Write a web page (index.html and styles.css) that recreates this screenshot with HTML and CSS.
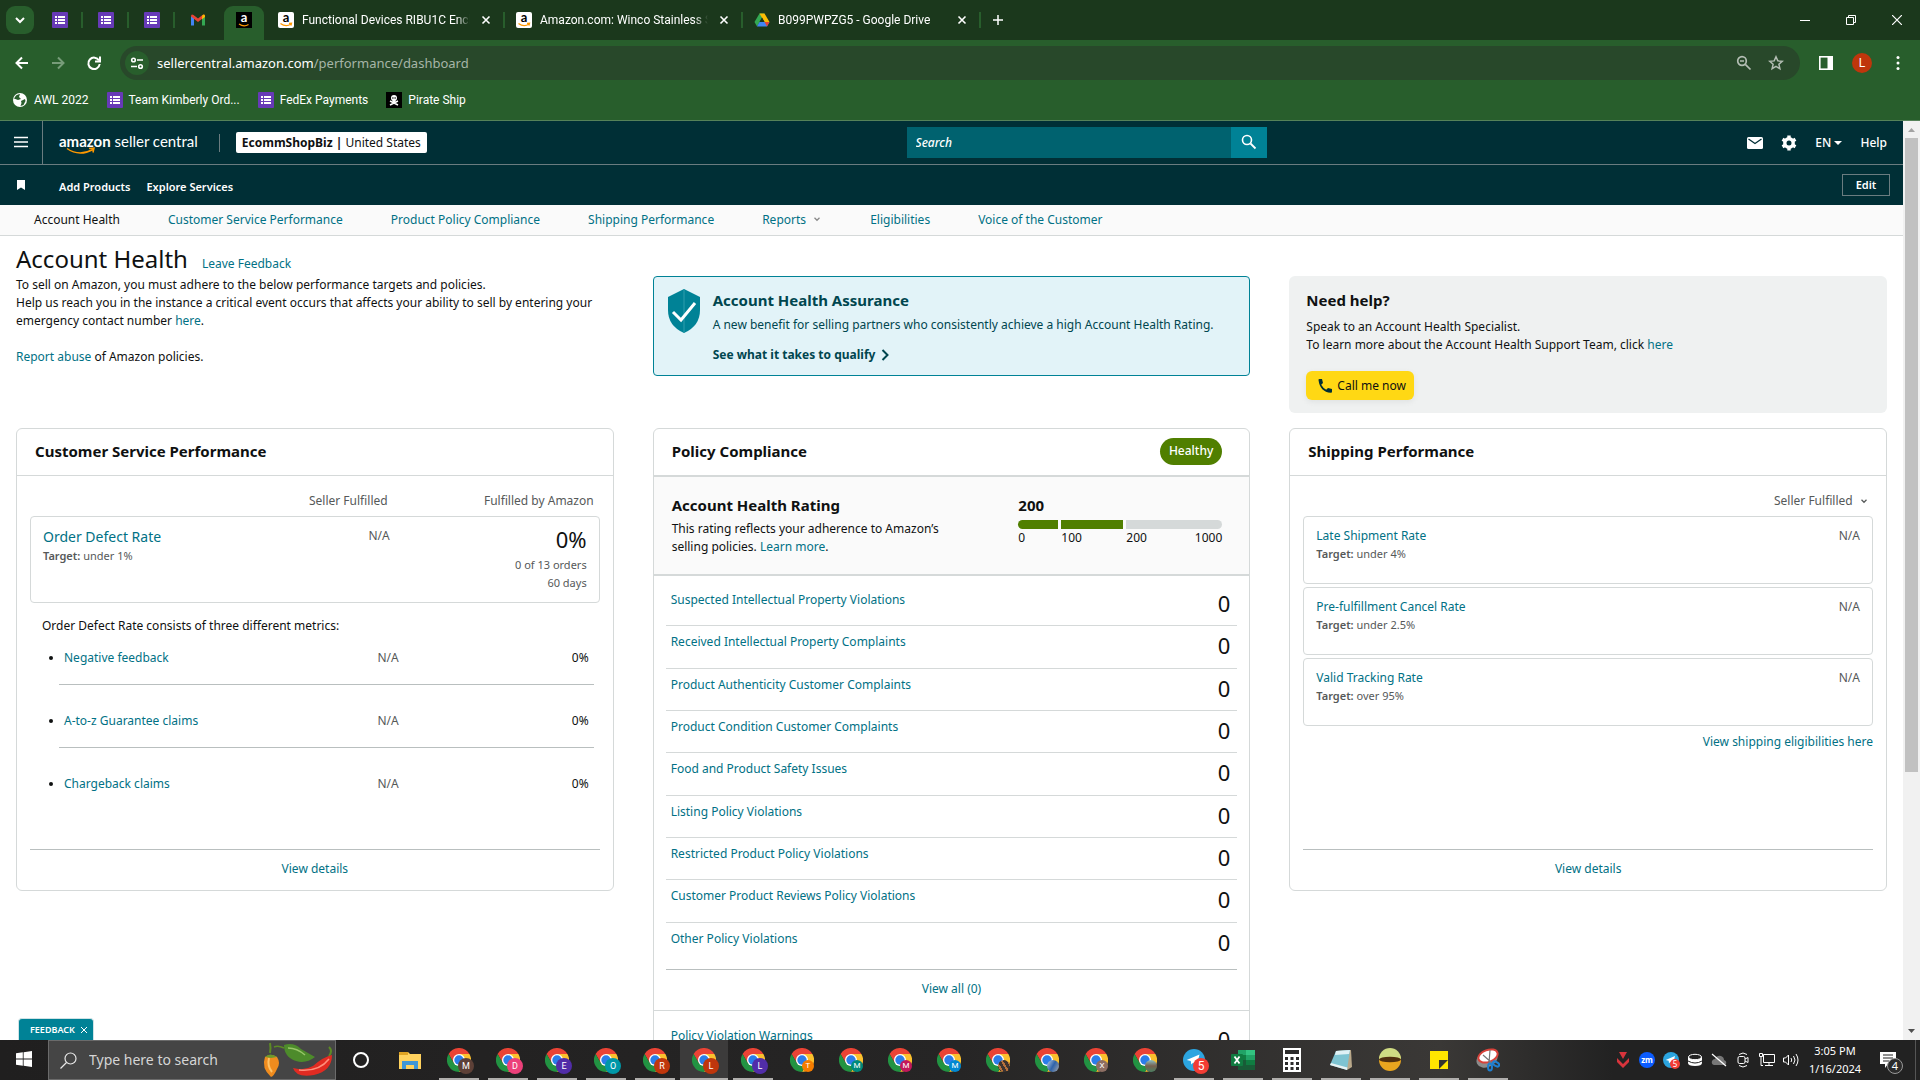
FILE: index.html
```html
<!DOCTYPE html>
<html lang="en">
<head>
    <meta charset="UTF-8">
    <meta name="viewport" content="width=device-width, initial-scale=1.0">
    <title>Account Health</title>
    <link rel="stylesheet" href="styles.css">
</head>
<body>

<!-- shared icons -->
<svg class="defs" aria-hidden="true">
    <symbol id="i-form" viewBox="0 0 16 16">
        <rect width="16" height="16" rx="1" fill="#673ab7"/>
        <path d="M3 4h2v2H3zM6 4h7v2H6zM3 7h2v2H3zM6 7h7v2H6zM3 10h2v2H3zM6 10h7v2H6z" fill="#fff"/>
    </symbol>
    <symbol id="i-amazon" viewBox="0 0 16 16">
        <rect width="16" height="16" rx="2" fill="#fff"/>
        <text x="8" y="10" text-anchor="middle" class="fav-a" fill="#000">a</text>
        <path d="M2.500 11.500q5.500 4 10.500 .5M11 11.300l2.500-.2-.6 2.400" fill="none" stroke="#f90" stroke-width="1.300"/>
    </symbol>
    <symbol id="i-amazon-dark" viewBox="0 0 16 16">
        <rect width="16" height="16" fill="#000"/>
        <text x="8" y="10" text-anchor="middle" class="fav-a" fill="#fff">a</text>
        <path d="M3 12q5 3.500 9.500 .5" fill="none" stroke="#f90" stroke-width="1.200"/>
    </symbol>
    <symbol id="i-close" viewBox="0 0 16 16"><path d="M4.500 4.500l7 7M11.500 4.500l-7 7" stroke="currentColor" stroke-width="1.600"/></symbol>
    <symbol id="i-chevron" viewBox="0 0 16 16"><path d="M4 6l4 4 4-4" fill="none" stroke="currentColor" stroke-width="2"/></symbol>
    <symbol id="i-chrome" viewBox="0 0 24 24">
        <path d="M12 6h10.400A12 12 0 0 0 1.600 6l5.200 9z" fill="#ea4335"/>
        <path d="M12 6h10.400A12 12 0 0 1 12 24l5.200-9z" fill="#fbc02d"/>
        <path d="M6.800 15L1.600 6A12 12 0 0 0 12 24l5.200-9z" fill="#229342"/>
        <circle cx="12" cy="12" r="6" fill="#fff"/>
        <circle cx="12" cy="12" r="4.700" fill="#2b7de9"/>
    </symbol>
    <symbol id="i-telegram" viewBox="0 0 24 24">
        <circle cx="12" cy="12" r="12" fill="#2ca5e0"/>
        <path d="M4 12l14-6-3 12-4-3-2 2-.5-4z" fill="#fff"/>
    </symbol>
    <symbol id="i-search" viewBox="0 0 16 16"><circle cx="6" cy="6" r="4.500" fill="none" stroke="currentColor" stroke-width="1.600"/><path d="M9.500 9.500l5 5" stroke="currentColor" stroke-width="1.800"/></symbol>
</svg>

<header class="browser">
    <div class="tab-strip">
        <button class="tab-search" aria-label="Search tabs"><svg width="16" height="16"><use href="#i-chevron"/></svg></button>
        <div class="tab pinned"><svg width="16" height="16"><use href="#i-form"/></svg></div>
        <div class="tab pinned"><svg width="16" height="16"><use href="#i-form"/></svg></div>
        <div class="tab pinned"><svg width="16" height="16"><use href="#i-form"/></svg></div>
        <div class="tab pinned no-line">
            <svg width="16" height="16" viewBox="0 0 16 16"><path d="M1 13.500V4l3 2v7.500z" fill="#4285f4"/><path d="M15 13.500V4l-3 2v7.500z" fill="#34a853"/><path d="M1 4.500Q1 1.500 3.500 3L8 6.500 12.500 3Q15 1.500 15 4.500L8 10z" fill="#ea4335"/><path d="M12 5.200l.5-2.200Q15 1.500 15 4.500V5l-3 2.300z" fill="#fbbc04"/></svg>
        </div>
        <div class="tab pinned active"><svg width="16" height="16"><use href="#i-amazon-dark"/></svg></div>
        <div class="tab">
            <svg width="16" height="16"><use href="#i-amazon"/></svg>
            <span class="tab-title">Functional Devices RIBU1C Encl</span>
            <button aria-label="Close tab"><svg width="16" height="16"><use href="#i-close"/></svg></button>
        </div>
        <div class="tab">
            <svg width="16" height="16"><use href="#i-amazon"/></svg>
            <span class="tab-title">Amazon.com: Winco Stainless S</span>
            <button aria-label="Close tab"><svg width="16" height="16"><use href="#i-close"/></svg></button>
        </div>
        <div class="tab">
            <svg width="16" height="16" viewBox="0 0 16 16"><path d="M5.500 1.500h5L8 6 3 14.500.5 10z" fill="#34a853"/><path d="M5.500 1.500h5l5 8.500h-5z" fill="#fbbc04"/><path d="M3 14.500L5.500 10h10L13 14.500z" fill="#4285f4"/><path d="M10.500 10h5L13 14.500z" fill="#ea4335"/><path d="M8 5.500L10.500 10h-5z" fill="#1b381c"/></svg>
            <span class="tab-title">B099PWPZG5 - Google Drive</span>
            <button aria-label="Close tab"><svg width="16" height="16"><use href="#i-close"/></svg></button>
        </div>
        <button class="new-tab" aria-label="New tab"><svg width="16" height="16" viewBox="0 0 16 16"><path d="M8 3v10M3 8h10" stroke="#fff" stroke-width="1.500"/></svg></button>
        <div class="window-buttons">
            <button aria-label="Minimize"><svg width="10" height="10"><path d="M0 5.500h10" stroke="#fff"/></svg></button>
            <button aria-label="Restore"><svg width="10" height="10" fill="none" stroke="#fff"><path d="M.5 2.500h7v7h-7zM2.500 2.500v-2h7v7h-2"/></svg></button>
            <button aria-label="Close"><svg width="10" height="10"><path d="M0 0l10 10M10 0L0 10" stroke="#fff" stroke-width="1.200"/></svg></button>
        </div>
    </div>
    <div class="toolbar">
        <div class="nav-buttons">
            <button aria-label="Back"><svg width="16" height="16" viewBox="0 0 16 16" fill="none" stroke="#fff" stroke-width="2"><path d="M14 8H3M8 2.500L2.500 8 8 13.500"/></svg></button>
            <button aria-label="Forward"><svg width="16" height="16" viewBox="0 0 16 16" fill="none" stroke="#779c79" stroke-width="2"><path d="M2 8h11M8 2.500L13.500 8 8 13.500"/></svg></button>
            <button aria-label="Reload"><svg width="16" height="16" viewBox="0 0 16 16" fill="none" stroke="#fff" stroke-width="2"><path d="M13 5.500A5.700 5.700 0 1 0 13.700 9"/><path d="M14 1.500V6.500H9" /></svg></button>
        </div>
        <div class="omnibox">
            <span class="site-info"><svg width="14" height="14" viewBox="0 0 14 14" fill="none" stroke="#fff" stroke-width="1.600"><circle cx="3.500" cy="4" r="1.800"/><path d="M7 4h6M1 10.500h6"/><circle cx="10.500" cy="10.500" r="1.800"/></svg></span>
            <p class="url">sellercentral.amazon.com<span>/performance/dashboard</span></p>
            <svg width="16" height="16" viewBox="0 0 16 16" fill="none" stroke="#b4beb4" stroke-width="1.700"><circle cx="6" cy="6" r="4.300"/><path d="M9.300 9.300l5.200 5.200M4 6h4"/></svg>
            <svg width="16" height="16" viewBox="0 0 16 16" fill="none" stroke="#b4beb4" stroke-width="1.500"><path d="M8 1.800l1.800 4.100 4.500.4-3.400 3 1 4.400L8 11.400l-3.900 2.300 1-4.400-3.400-3 4.500-.4z"/></svg>
        </div>
        <svg width="16" height="16" viewBox="0 0 16 16"><rect x="1.800" y="1.800" width="12.400" height="12.400" fill="none" stroke="#fff" stroke-width="1.600"/><path d="M9.500 2H14v12H9.500z" fill="#fff"/></svg>
        <span class="avatar">L</span>
        <svg width="16" height="16" viewBox="0 0 16 16" fill="#fff"><circle cx="8" cy="2.500" r="1.500"/><circle cx="8" cy="8" r="1.500"/><circle cx="8" cy="13.500" r="1.500"/></svg>
    </div>
    <nav class="bookmarks">
        <a href="#"><svg width="16" height="16" viewBox="0 0 16 16"><circle cx="8" cy="8" r="7" fill="#fff"/><path d="M4 3.500Q6 2 8 2L7 5 9 7 6 8 2 6.500zM9 9l4-2 .5 2-2 4-3 1 1-3z" fill="#285e2c"/></svg>AWL 2022</a>
        <a href="#"><svg width="16" height="16"><use href="#i-form"/></svg>Team Kimberly Ord...</a>
        <a href="#"><svg width="16" height="16"><use href="#i-form"/></svg>FedEx Payments</a>
        <a href="#"><svg width="16" height="16" viewBox="0 0 16 16"><rect width="16" height="16" fill="#000"/><circle cx="8" cy="6" r="3" fill="#fff"/><path d="M6.500 8h3v2h-3z" fill="#fff"/><path d="M4 9l8 4M12 9l-8 4" stroke="#fff" stroke-width="1.500"/><circle cx="6.900" cy="6" r=".8"/><circle cx="9.100" cy="6" r=".8"/></svg>Pirate Ship</a>
    </nav>
</header>

<div class="viewport">
    <div class="page">
        <div class="sc-header">
            <button class="burger" aria-label="Menu"><svg width="14" height="12" viewBox="0 0 14 12"><path d="M0 1.500h14M0 6h14M0 10.500h14" stroke="#fff" stroke-width="1.500"/></svg></button>
            <a class="logo" href="#"><b>amazon</b> seller central
                <svg width="30" height="8" viewBox="0 0 30 8" fill="none" stroke="#f90" stroke-width="1.500"><path d="M1 1.500Q13 10 27 2.500M23 1.500l5-.5-1 4.500"/></svg>
            </a>
            <button class="store"><b>EcommShopBiz |</b> United States</button>
            <form class="search">
                <input type="text" placeholder="Search" aria-label="Search">
                <button type="button" aria-label="Search"><svg width="16" height="16"><use href="#i-search"/></svg></button>
            </form>
            <div class="tools">
                <a href="#" aria-label="Messages"><svg width="16" height="12" viewBox="0 0 16 12"><rect width="16" height="12" rx="1.500" fill="#fff"/><path d="M1.500 2L8 6.500 14.500 2" fill="none" stroke="#002f36" stroke-width="1.300"/></svg></a>
                <a href="#" aria-label="Settings"><svg width="16" height="16" viewBox="0 0 16 16"><circle cx="8" cy="8" r="4.200" fill="none" stroke="#fff" stroke-width="3.400"/><path d="M8 .5v3M8 12.500v3M1.500 4.250l2.600 1.500M11.900 10.250l2.600 1.500M14.500 4.250l-2.600 1.500M4.100 10.250l-2.600 1.500" stroke="#fff" stroke-width="3.400"/></svg></a>
                <button>EN <svg width="8" height="4"><path d="M0 0h8L4 4z" fill="#fff"/></svg></button>
                <a href="#">Help</a>
            </div>
        </div>
        <div class="sc-favorites">
            <svg width="8" height="10" viewBox="0 0 8 10"><path d="M0 0h8v10L4 7.500 0 10z" fill="#fff"/></svg>
            <a href="#">Add Products</a>
            <a href="#">Explore Services</a>
            <button>Edit</button>
        </div>
        <nav class="sc-tabs">
            <a class="current" href="#">Account Health</a>
            <a href="#">Customer Service Performance</a>
            <a href="#">Product Policy Compliance</a>
            <a href="#">Shipping Performance</a>
            <a href="#">Reports <svg width="10" height="10" viewBox="0 0 16 16"><use href="#i-chevron"/></svg></a>
            <a href="#">Eligibilities</a>
            <a href="#">Voice of the Customer</a>
        </nav>

        <main>
            <section class="intro">
                <div class="title-row"><h1>Account Health</h1><a href="#">Leave Feedback</a></div>
                <p>To sell on Amazon, you must adhere to the below performance targets and policies.</p>
                <p>Help us reach you in the instance a critical event occurs that affects your ability to sell by entering your emergency contact number <a href="#">here</a>.</p>
                <p class="abuse"><a href="#">Report abuse</a> of Amazon policies.</p>
            </section>

            <section class="assurance">
                <svg width="34" height="44" viewBox="0 0 34 44"><path d="M17 0l16 8v13q0 16-16 23Q1 37 1 21V8z" fill="#008296"/><path d="M17 0v44" stroke="#2f9dac"/><path d="M6 23l8 8 14-17" fill="none" stroke="#fff" stroke-width="3"/></svg>
                <div>
                    <h2>Account Health Assurance</h2>
                    <p>A new benefit for selling partners who consistently achieve a high Account Health Rating.</p>
                    <a href="#">See what it takes to qualify <svg width="8" height="12" viewBox="0 0 8 12"><path d="M1.500 1l5 5-5 5" fill="none" stroke="#00464f" stroke-width="2"/></svg></a>
                </div>
            </section>

            <section class="help">
                <h2>Need help?</h2>
                <p>Speak to an Account Health Specialist.</p>
                <p>To learn more about the Account Health Support Team, click <a href="#">here</a></p>
                <button><svg width="14" height="14" viewBox="0 0 14 14"><path d="M.5 1Q.3 0 1.500 0H4l1 4-1.800 1.800Q5 9 8.200 10.800L10 9l4 1v2.500q0 1.500-1.200 1.300Q2 13 .5 1z" fill="#002f36"/></svg>Call me now</button>
            </section>

            <section class="card">
                <div class="card-head"><h2>Customer Service Performance</h2></div>
                <div class="card-body">
                    <div class="columns col-head"><span></span><span>Seller Fulfilled</span><span>Fulfilled by Amazon</span></div>
                    <div class="columns odr">
                        <div><a class="odr-link" href="#">Order Defect Rate</a><p class="target"><b>Target:</b> under 1%</p></div>
                        <span class="grey">N/A</span>
                        <div class="odr-value"><strong>0%</strong><p>0 of 13 orders</p><p>60 days</p></div>
                    </div>
                    <p class="consists">Order Defect Rate consists of three different metrics:</p>
                    <ul class="metrics">
                        <li><div class="columns"><a href="#">Negative feedback</a><span class="grey">N/A</span><span>0%</span></div></li>
                        <li><div class="columns"><a href="#">A-to-z Guarantee claims</a><span class="grey">N/A</span><span>0%</span></div></li>
                        <li><div class="columns"><a href="#">Chargeback claims</a><span class="grey">N/A</span><span>0%</span></div></li>
                    </ul>
                    <div class="card-foot"><a href="#">View details</a></div>
                </div>
            </section>

            <section class="card policy">
                <div class="card-head"><h2>Policy Compliance</h2><span class="healthy">Healthy</span></div>
                <div class="rating">
                    <div class="rating-text">
                        <h2>Account Health Rating</h2>
                        <p>This rating reflects your adherence to Amazon’s selling policies. <a href="#">Learn more</a>.</p>
                    </div>
                    <div class="meter">
                        <h2>200</h2>
                        <div class="bar"><i></i><i></i><i></i></div>
                        <div class="scale"><span>0</span><span>100</span><span>200</span><span>1000</span></div>
                    </div>
                </div>
                <ul class="violations">
                    <li><a href="#">Suspected Intellectual Property Violations</a><span>0</span></li>
                    <li><a href="#">Received Intellectual Property Complaints</a><span>0</span></li>
                    <li><a href="#">Product Authenticity Customer Complaints</a><span>0</span></li>
                    <li><a href="#">Product Condition Customer Complaints</a><span>0</span></li>
                    <li><a href="#">Food and Product Safety Issues</a><span>0</span></li>
                    <li><a href="#">Listing Policy Violations</a><span>0</span></li>
                    <li><a href="#">Restricted Product Policy Violations</a><span>0</span></li>
                    <li><a href="#">Customer Product Reviews Policy Violations</a><span>0</span></li>
                    <li><a href="#">Other Policy Violations</a><span>0</span></li>
                </ul>
                <div class="view-all"><a href="#">View all (0)</a></div>
                <ul class="violations warnings">
                    <li><a href="#">Policy Violation Warnings</a><span>0</span></li>
                </ul>
            </section>

            <section class="card">
                <div class="card-head"><h2>Shipping Performance</h2></div>
                <div class="card-body">
                    <label class="fulfilment">
                        <select aria-label="Fulfilment"><option>Seller Fulfilled</option></select>
                        <svg width="10" height="10" viewBox="0 0 16 16"><use href="#i-chevron"/></svg>
                    </label>
                    <div class="rate"><div><a href="#">Late Shipment Rate</a><p class="target"><b>Target:</b> under 4%</p></div><span class="grey">N/A</span></div>
                    <div class="rate"><div><a href="#">Pre-fulfillment Cancel Rate</a><p class="target"><b>Target:</b> under 2.5%</p></div><span class="grey">N/A</span></div>
                    <div class="rate"><div><a href="#">Valid Tracking Rate</a><p class="target"><b>Target:</b> over 95%</p></div><span class="grey">N/A</span></div>
                    <a class="eligibilities" href="#">View shipping eligibilities here</a>
                    <div class="card-foot"><a href="#">View details</a></div>
                </div>
            </section>
        </main>
        <button class="feedback">FEEDBACK<svg width="8" height="8" viewBox="0 0 8 8"><path d="M1 1l6 6M7 1L1 7" stroke="#fff"/></svg></button>
    </div>
    <div class="scrollbar">
        <svg width="17" height="17"><path d="M5 11h7L8.500 7z" fill="#a3a3a3"/></svg>
        <div class="thumb"></div>
        <svg width="17" height="17"><path d="M5 6h7L8.500 10z" fill="#505050"/></svg>
    </div>
</div>

<footer class="taskbar">
    <button class="start" aria-label="Start"><svg width="16" height="16" viewBox="0 0 16 16" fill="#fff"><path d="M0 2.300L6.800 1.300V7.600H0zM7.600 1.200L16 0V7.600H7.600zM0 8.400H6.800V14.700L0 13.700zM7.600 8.400H16V16L7.600 14.800z"/></svg></button>
    <label class="task-search">
        <svg width="17" height="17" viewBox="0 0 17 17" fill="none" stroke="#e8e8e8" stroke-width="1.200"><circle cx="10.500" cy="6.500" r="5.500"/><path d="M6.500 10.500L.5 16.500"/></svg>
        <input type="text" placeholder="Type here to search">
        <svg class="peppers" width="72" height="36" viewBox="0 0 72 36">
            <path d="M9 11Q10 6 9 1" fill="none" stroke="#5d8a25" stroke-width="2"/>
            <path d="M4 15q6-4 12 0 4 6 0 12-3 7-6 8-10-9-6-20z" fill="#f08c1e"/><path d="M8 16q-2 8 3 14" stroke="#ffc266" stroke-width="2" fill="none"/>
            <path d="M4 15q5-5 12 0l-6 1z" fill="#6d9a2c"/>
            <path d="M23 6Q17 3 13 5" fill="none" stroke="#5d8a25" stroke-width="1.500"/>
            <path d="M23 3q10-3 17 4 7 4 14 8-9 7-19 4-12-4-12-16z" fill="#4d8b2b"/><path d="M27 6q9 0 17 7" stroke="#98c768" stroke-width="1.500" fill="none"/>
            <path d="M68 14q4-5 0-9" fill="none" stroke="#5d8a25" stroke-width="2"/>
            <path d="M71 13q0 16-18 20-18 3-21-7 11 3 20-2 10-9 19-11z" fill="#e12b22"/><path d="M38 28q20 2 30-11" stroke="#ff8f7c" stroke-width="1.500" fill="none"/>
        </svg>
    </label>
    <nav class="apps">
        <a href="#"><svg width="24" height="24" viewBox="0 0 24 24"><circle cx="12" cy="12" r="7" fill="none" stroke="#fff" stroke-width="2"/></svg></a>
        <a href="#"><svg width="24" height="24" viewBox="0 0 24 24"><path d="M1 4h9l2 2h11v15H1z" fill="#ffd25e"/><path d="M1 4h9v3H1z" fill="#dfa323"/><path d="M4 21v-8h16v8h-4v-4H8v4z" fill="#3f97d6"/></svg></a>
        <a class="open" href="#"><svg width="24" height="24"><use href="#i-chrome"/></svg><span class="badge brown">M</span></a>
        <a class="open" href="#"><svg width="24" height="24"><use href="#i-chrome"/></svg><span class="badge pink">D</span></a>
        <a class="open" href="#"><svg width="24" height="24"><use href="#i-chrome"/></svg><span class="badge purple">E</span></a>
        <a class="open" href="#"><svg width="24" height="24"><use href="#i-chrome"/></svg><span class="badge teal">O</span></a>
        <a class="open" href="#"><svg width="24" height="24"><use href="#i-chrome"/></svg><span class="badge rust">R</span></a>
        <a class="open focused" href="#"><svg width="24" height="24"><use href="#i-chrome"/></svg><span class="badge rust">L</span></a>
        <a class="open" href="#"><svg width="24" height="24"><use href="#i-chrome"/></svg><span class="badge purple">L</span></a>
        <a href="#"><svg width="24" height="24"><use href="#i-chrome"/></svg><span class="badge small orange">T</span></a>
        <a href="#"><svg width="24" height="24"><use href="#i-chrome"/></svg><span class="badge small green">M</span></a>
        <a href="#"><svg width="24" height="24"><use href="#i-chrome"/></svg><span class="badge small magenta">M</span></a>
        <a href="#"><svg width="24" height="24"><use href="#i-chrome"/></svg><span class="badge small blue">M</span></a>
        <a href="#"><svg width="24" height="24"><use href="#i-chrome"/></svg><span class="badge small photo-a"></span></a>
        <a href="#"><svg width="24" height="24"><use href="#i-chrome"/></svg><span class="badge small photo-b"></span></a>
        <a href="#"><svg width="24" height="24"><use href="#i-chrome"/></svg><span class="badge small tan">X</span></a>
        <a href="#"><svg width="24" height="24"><use href="#i-chrome"/></svg><span class="badge small photo-c"></span></a>
        <a class="open" href="#"><svg width="22" height="22"><use href="#i-telegram"/></svg><span class="badge red">5</span></a>
        <a class="open" href="#"><svg width="24" height="24" viewBox="0 0 24 24"><path d="M7 2h17v20H7z" fill="#21a366"/><path d="M7 7h8v5H7z" fill="#107c41"/><path d="M15 2h9v5h-9z" fill="#33c481"/><path d="M7 12h8v5H7z" fill="#185c37"/><path d="M15 12h9v5h-9z" fill="#107c41"/><path d="M7 17h17v5H7z" fill="#185c37"/><rect y="6" width="12" height="12" rx="1" fill="#107c41"/><path d="M3.500 8.500l5 7M8.500 8.500l-5 7" stroke="#fff" stroke-width="1.800"/></svg></a>
        <a class="open" href="#"><svg width="24" height="24" viewBox="0 0 24 24"><path d="M3 0h18v24H3z" fill="#fff"/><path d="M5 2h14v4H5zM5 9h3v3H5zM10.500 9h3v3h-3zM16 9h3v3h-3zM5 14h3v3H5zM10.500 14h3v3h-3zM16 14h3v3h-3zM5 19h3v3H5zM10.500 19h3v3h-3zM16 19h3v3h-3z" fill="#2c2b2b"/></svg></a>
        <a class="open" href="#"><svg width="24" height="24" viewBox="0 0 24 24"><path d="M7 3l15-1 1 17-5 3z" fill="#b9a88a"/><path d="M7 3l14-1-3 20-17-5z" fill="#7ec4d2"/><path d="M7 3l14-1-1 4L6 7z" fill="#dff1f5"/><path d="M1 17l17 5 .4-2.500L2 15z" fill="#e8f2f3"/></svg></a>
        <a class="open" href="#"><svg width="24" height="24" viewBox="0 0 24 24"><circle cx="12" cy="12" r="11" fill="#e9a51f"/><path d="M1 11a11 11 0 0 1 22 0z" fill="#cfdc83"/><ellipse cx="12" cy="11.500" rx="11" ry="2.800" fill="#50300f"/></svg></a>
        <a class="open" href="#"><svg width="24" height="24" viewBox="0 0 24 24"><path d="M3 3h18v9h-9v9H3z" fill="#ffe500"/><path d="M12 21v-9h9z" fill="#33322f"/><path d="M21 12v9h-9z" fill="#ffe500"/></svg></a>
        <a class="open" href="#"><svg width="24" height="24" viewBox="0 0 24 24"><ellipse cx="11" cy="11" rx="11" ry="8" fill="#8b8b8b" transform="rotate(-25 11 11)"/><ellipse cx="12" cy="8" rx="10" ry="6" fill="#fff" stroke="#d9423a" stroke-width="2" transform="rotate(-20 12 8)"/><path d="M7 7l9 8M14 2l-1 13" stroke="#777" stroke-width="1.200"/><g fill="none" stroke="#1f7fd0" stroke-width="2"><ellipse cx="14" cy="19" rx="2" ry="3.500"/><ellipse cx="20" cy="16" rx="3.500" ry="2" transform="rotate(30 20 16)"/></g></svg></a>
    </nav>
    <div class="tray">
        <svg width="16" height="16" viewBox="0 0 16 16" fill="#d8343c"><path d="M4 0h8L8 7zM2 6l6 6 6-6v4l-6 6-6-6z"/></svg>
        <span class="zoom">zm</span>
        <span class="tray-telegram"><svg width="16" height="16"><use href="#i-telegram"/></svg><i>5</i></span>
        <svg width="16" height="16" viewBox="0 0 16 16"><path d="M1 5v6q0 3 7 3t7-3V5z" fill="#fff"/><ellipse cx="8" cy="5" rx="6.500" ry="2.700" fill="#222" stroke="#fff"/><path d="M1 9q7 4 14 0" fill="none" stroke="#222"/></svg>
        <svg width="16" height="16" viewBox="0 0 16 16"><path d="M3 13q-3-1-2-4 1-2 3-2 2-4 6-3 3 1 3 4 3 1 2 4l-1 1z" fill="#777"/><path d="M1 2l14 12" stroke="#fff" stroke-width="1.200"/></svg>
        <svg width="16" height="16" viewBox="0 0 16 16" fill="none" stroke="#fff"><rect x="3" y="4.500" width="7" height="7" rx="1.500"/><path d="M10 7l3-1.500v5L10 9M4 2.500q4-3 8 0M4 13.500q4 3 8 0"/></svg>
        <svg width="16" height="16" viewBox="0 0 16 16" fill="none" stroke="#fff"><path d="M4.500 2.500h11v8h-11zM10 10.500v3M6 13.500h8M.5 1.500h3v3h-3zM2 4.500v9h2"/></svg>
        <svg width="16" height="16" viewBox="0 0 16 16" fill="none" stroke="#fff"><path d="M.5 6h2l3-3v10l-3-3h-2zM8 6q1.500 2 0 4M10.500 4q3 4 0 8M13 2q4 6 0 12"/></svg>
        <div class="clock"><p>3:05 PM</p><p>1/16/2024</p></div>
        <span class="notify"><svg width="18" height="16" viewBox="0 0 18 16"><path d="M1 0h16v12H9l-3 4v-4H1z" fill="#fff"/><path d="M4 3h10M4 6h10M4 9h6" stroke="#222"/></svg><i>4</i></span>
    </div>
</footer>

</body>
</html>
```
FILE: styles.css
```css
* {
    box-sizing: border-box;
    margin: 0;
    padding: 0;
}

body {
    display: flex;
    flex-direction: column;
    height: 100vh;
    overflow: hidden;
    background-color: #fff;
    color: #0f1111;
    font-family: "Noto Sans", "Open Sans", sans-serif;
    font-size: 12px;
    line-height: 18px;
}

a {
    color: #017185;
    text-decoration: none;
}

button, input, select {
    font: inherit;
    color: inherit;
    background: none;
    border: none;
}

svg {
    flex: none;
}

ul {
    list-style: none;
}

.defs {
    display: none;
}

.fav-a {
    font: bold 13px Lato, sans-serif;
}

/* Browser */
.browser {
    background-color: #285e2c;
    border-bottom: 1px solid #558259;
    color: #fff;
    font-family: Roboto, sans-serif;
}

.tab-strip {
    display: flex;
    align-items: center;
    height: 40px;
    padding-left: 6px;
    background-color: #1b381c;
}

.tab-search {
    display: flex;
    align-items: center;
    justify-content: center;
    width: 28px;
    height: 28px;
    margin-right: 3px;
    border-radius: 9px;
    background-color: #285e2c;
}

.tab {
    position: relative;
    display: flex;
    align-items: center;
    gap: 8px;
    width: 238px;
    height: 34px;
    padding: 0 11px;
}

.tab::after {
    content: "";
    position: absolute;
    right: 0;
    width: 2px;
    height: 16px;
    background-color: #285e2c;
}

.tab.no-line::after, .tab.active::after {
    display: none;
}

.tab.pinned {
    justify-content: center;
    width: 46px;
    padding: 0;
}

.tab.active {
    align-self: flex-end;
    width: 40px;
    margin: 0 3px;
    padding-bottom: 6px;
    border-radius: 9px 9px 0 0;
    background-color: #285e2c;
}

.tab-title {
    flex: 1;
    overflow: hidden;
    white-space: nowrap;
    mask-image: linear-gradient(to right, #000 92%, transparent);
}

.tab button, .new-tab {
    display: flex;
}

.new-tab {
    margin-left: 9px;
}

.window-buttons {
    display: flex;
    margin-left: auto;
}

.window-buttons button {
    width: 46px;
    line-height: 10px;
}

.toolbar {
    display: flex;
    align-items: center;
    gap: 18px;
    height: 46px;
    padding: 0 14px;
}

.nav-buttons {
    display: flex;
    gap: 20px;
}

.nav-buttons button {
    display: flex;
}

.omnibox {
    flex: 1;
    display: flex;
    align-items: center;
    gap: 16px;
    height: 34px;
    padding: 0 16px 0 5px;
    border-radius: 17px;
    background-color: #28482a;
}

.site-info {
    display: flex;
    align-items: center;
    justify-content: center;
    width: 24px;
    height: 24px;
    border-radius: 50%;
    background-color: #285e2c;
}

.url {
    flex: 1;
    margin-left: -8px;
    font: 13px "Noto Sans", sans-serif;
}

.url span {
    color: #a6b5a7;
}

.avatar {
    width: 20px;
    height: 20px;
    border-radius: 50%;
    background-color: #bf360c;
    line-height: 20px;
    text-align: center;
}

.bookmarks {
    display: flex;
    gap: 18px;
    height: 34px;
    padding: 5px 12px;
}

.bookmarks a {
    display: flex;
    align-items: center;
    gap: 6px;
    height: 18px;
    color: #fff;
}

/* Page */
.viewport {
    flex: 1;
    display: flex;
    min-height: 0;
}

.page {
    position: relative;
    flex: 1;
    overflow: hidden;
}

.sc-header, .sc-favorites {
    display: flex;
    align-items: center;
    background-color: #002f36;
    color: #fff;
}

.sc-header {
    position: relative;
    height: 44px;
    border-bottom: 1px solid #6a7c80;
}

.burger {
    width: 43px;
    height: 43px;
    border-right: 1px solid #6a7c80;
    line-height: 12px;
}

.logo {
    position: relative;
    margin: 0 21px 4px 16px;
    color: #fff;
    font: 15px/20px Lato, sans-serif;
}

.logo svg {
    position: absolute;
    left: 7px;
    top: 16px;
}

.store {
    position: relative;
    height: 21px;
    margin-left: 17px;
    padding: 0 6px;
    border-radius: 2px;
    background-color: #fff;
    color: #0f1111;
}

.store::before {
    content: "";
    position: absolute;
    left: -17px;
    top: 2px;
    height: 18px;
    border-left: 1px solid #6a7c80;
}

.search {
    position: absolute;
    left: 50%;
    display: flex;
    width: 360px;
    height: 31px;
    margin-left: -45px;
}

.search input {
    flex: 1;
    padding: 0 9px;
    background-color: #00626f;
}

.search input::placeholder {
    color: #fff;
    font-weight: 500;
    font-style: italic;
}

.search button {
    width: 36px;
    padding-top: 3px;
    background-color: #008296;
}

.tools {
    display: flex;
    align-items: center;
    gap: 18px;
    margin-left: auto;
    padding-right: 16px;
    font-weight: 500;
}

.tools a {
    display: flex;
    color: #fff;
}

.tools svg {
    vertical-align: middle;
}

.sc-favorites {
    height: 40px;
    padding: 0 13px 0 17px;
    font-size: 11px;
    font-weight: 600;
}

.sc-favorites a {
    margin-left: 16px;
    padding-top: 3px;
    color: #fff;
}

.sc-favorites svg + a {
    margin-left: 34px;
}

.sc-favorites button {
    width: 48px;
    height: 22px;
    margin-left: auto;
    border: 1px solid #6a7c80;
    line-height: 18px;
}

.sc-tabs {
    display: flex;
    gap: 48px;
    padding: 6px 34px;
    border-bottom: 1px solid #d5d9d9;
    background-color: #fafafa;
}

.sc-tabs .current {
    color: #0f1111;
}

.sc-tabs svg {
    margin-left: 3px;
    color: #888;
}

main {
    display: grid;
    grid-template-columns: repeat(3, 1fr);
    gap: 15px 39px;
    align-items: start;
    padding: 7px 16px;
}

h1 {
    font-size: 24px;
    font-weight: 400;
    line-height: 32px;
}

h2 {
    font-size: 15px;
    font-weight: 700;
    line-height: 22px;
}

.title-row {
    display: flex;
    align-items: baseline;
    gap: 14px;
    margin-bottom: 1px;
}

.abuse {
    margin-top: 18px;
}

.assurance {
    display: flex;
    gap: 12px;
    margin-top: 33px;
    padding: 12px 13px 11px;
    border: 1px solid #008296;
    border-radius: 4px;
    background-color: #e2f3f8;
    color: #00464f;
}

.assurance p {
    margin: 5px 0 12px;
}

.assurance a {
    display: flex;
    align-items: center;
    gap: 6px;
    color: #00464f;
    font-weight: 700;
}

.help {
    margin-top: 33px;
    padding: 13px 17px;
    border-radius: 6px;
    background-color: #eff1f1;
}

.help h2 {
    margin-bottom: 7px;
}

.help button {
    display: flex;
    align-items: center;
    gap: 5px;
    height: 29px;
    margin-top: 17px;
    padding: 0 8px 0 12px;
    border-radius: 6px;
    background-color: #ffd814;
    box-shadow: 0 2px 5px rgba(213, 217, 217, 0.6);
}

/* Cards */
.card {
    display: flex;
    flex-direction: column;
    min-height: 463px;
    border: 1px solid #d5d9d9;
    border-radius: 6px;
}

.card-head {
    display: flex;
    align-items: center;
    justify-content: space-between;
    height: 47px;
    padding: 0 27px 2px 18px;
    border-bottom: 1px solid #d5d9d9;
}

.card-body {
    flex: 1;
    display: flex;
    flex-direction: column;
    padding: 0 13px;
}

.columns {
    display: grid;
    grid-template-columns: 1fr auto 197px;
    text-align: right;
}

.columns > :first-child {
    text-align: left;
}

.col-head {
    grid-template-columns: 1fr auto 206px;
    padding: 16px 6px 6px;
    color: #565959;
}

.grey {
    color: #565959;
}

.target {
    color: #565959;
    font-size: 11px;
}

.target b {
    font-weight: 600;
}

.odr {
    height: 87px;
    padding: 10px 12px;
    border: 1px solid #d5d9d9;
    border-radius: 4px;
}

.odr-link {
    font-size: 14px;
    line-height: 20px;
}

.odr-value {
    color: #565959;
    font-size: 11px;
}

.odr-value strong {
    display: block;
    margin-bottom: 4px;
    color: #0f1111;
    font-size: 22px;
    font-weight: 400;
    line-height: 25px;
}

.consists {
    padding: 14px 12px;
}

.metrics {
    margin-left: 34px;
    list-style: disc;
}

.metrics .columns {
    grid-template-columns: 1fr auto 190px;
    margin: 0 6px 27px -5px;
    padding: 0 5px 17px;
    border-bottom: 1px solid #b9bfbf;
}

.metrics li:last-child .columns {
    margin-bottom: 0;
    border-bottom: none;
}

.card-foot {
    height: 41px;
    margin-top: auto;
    padding-top: 10px;
    border-top: 1px solid #b9bfbf;
    text-align: center;
}

.healthy {
    padding: 4px 9px 5px;
    border-radius: 14px;
    background-color: #507f00;
    color: #fff;
    font-weight: 500;
}

.policy .card-head {
    height: 48px;
    border-bottom-width: 2px;
}

.rating {
    display: flex;
    justify-content: space-between;
    padding: 17px 27px 18px 18px;
    border-bottom: 2px solid #d5d9d9;
    background-color: #fafafa;
}

.rating-text {
    width: 290px;
}

.rating-text p {
    margin-top: 4px;
}

.meter {
    width: 204px;
}

.bar, .scale {
    display: grid;
    grid-template-columns: 40px 62px 1fr;
    gap: 3px;
}

.bar {
    margin-top: 4px;
}

.bar i {
    height: 9px;
    background-color: #507f00;
}

.bar i:first-child {
    border-radius: 5px 0 0 5px;
}

.bar i:last-child {
    border-radius: 0 5px 5px 0;
    background-color: #d5d9d9;
}

.scale {
    grid-template-columns: 40px 62px 1fr auto;
}

.violations {
    display: grid;
    grid-auto-rows: 1fr;
    height: 394px;
    margin: 0 12px;
    padding: 8px 0 4px;
    border-bottom: 1px solid #b9bfbf;
}

.violations li {
    display: flex;
    justify-content: space-between;
    padding: 0 7px 0 5px;
    border-bottom: 1px solid #d5d9d9;
    line-height: 31px;
}

.violations li:last-child {
    border-bottom: none;
}

.violations span {
    font-size: 22px;
    line-height: 38px;
}

.violations.warnings {
    height: auto;
    padding-top: 9px;
    border-bottom: none;
}

.view-all {
    height: 41px;
    padding-top: 10px;
    border-bottom: 1px solid #d5d9d9;
    text-align: center;
}

.fulfilment {
    display: flex;
    align-items: center;
    justify-content: flex-end;
    gap: 6px;
    padding: 16px 4px 6px;
    color: #565959;
}

.fulfilment select {
    appearance: none;
}

.rate {
    display: flex;
    justify-content: space-between;
    height: 68px;
    margin-bottom: 3px;
    padding: 10px 12px;
    border: 1px solid #d5d9d9;
    border-radius: 4px;
}

.eligibilities {
    margin-top: 4px;
    text-align: right;
}

.feedback {
    position: absolute;
    left: 18px;
    bottom: 0;
    display: flex;
    align-items: center;
    gap: 5px;
    height: 22px;
    padding: 0 5px 0 11px;
    border: 1px solid #cfe3e6;
    border-bottom: none;
    border-radius: 4px 4px 0 0;
    background-color: #008296;
    color: #fff;
    font-size: 9px;
    font-weight: 600;
}

.scrollbar {
    display: flex;
    flex-direction: column;
    width: 17px;
    background-color: #f1f1f1;
}

.thumb {
    height: 69%;
    margin: 0 2px auto;
    background-color: #c1c1c1;
}

/* Taskbar */
.taskbar {
    display: flex;
    height: 40px;
    background: linear-gradient(to right, #201f1f, #262525 50%, #3a3836 75%, #222 84%);
    color: #fff;
}

.start {
    width: 48px;
    padding-top: 3px;
}

.task-search {
    display: flex;
    align-items: center;
    width: 288px;
    padding: 0 2px 0 11px;
    border: 1px solid #6b6b6b;
    background-color: #454545;
}

.task-search input {
    flex: 1;
    min-width: 0;
    padding-left: 12px;
    font-size: 14px;
}

.task-search input::placeholder {
    color: #d5d5d5;
}

.apps {
    display: flex;
    gap: 1px;
    margin-left: 1px;
}

.apps a {
    position: relative;
    display: flex;
    align-items: center;
    justify-content: center;
    width: 48px;
}

.apps .open::after {
    content: "";
    position: absolute;
    left: 4px;
    right: 4px;
    bottom: 0;
    height: 2px;
    background-color: #b0aeac;
}

.apps .focused {
    background-color: #3c3b3b;
}

.apps .focused::after {
    left: 0;
    right: 0;
}

.badge {
    position: absolute;
    right: 9px;
    bottom: 6px;
    width: 16px;
    height: 16px;
    border-radius: 50%;
    color: #fff;
    font: 9px/16px Roboto, sans-serif;
    text-align: center;
}

.badge.small {
    right: 12px;
    bottom: 8px;
    width: 12px;
    height: 12px;
    font-size: 8px;
    line-height: 12px;
}

.brown { background-color: #5d4037; }
.pink { background-color: #ec407a; }
.purple { background-color: #512da8; }
.teal { background-color: #0097a7; }
.rust { background-color: #bf360c; }
.orange { background-color: #f57c00; }
.green { background-color: #00897b; }
.magenta { background-color: #c2185b; }
.blue { background-color: #0288d1; }
.tan { background-color: #8d6e63; }
.red { background-color: #f23c34; font-size: 12px; }
.photo-a { background: repeating-linear-gradient(60deg, #3c3431 0 3px, #b5703c 3px 5px); }
.photo-b { background: linear-gradient(120deg, #b7cde6, #2e62a8 50%, #a8a8a8); }
.photo-c { background: linear-gradient(#8dc0c4, #76604e 50%, #4b7f62); }

.tray {
    display: flex;
    align-items: center;
    gap: 8px;
    margin: 0 4px 0 auto;
    padding-right: 18px;
    border-right: 1px solid #555;
}

.tray i {
    font-style: normal;
}

.zoom {
    width: 16px;
    height: 16px;
    border-radius: 50%;
    background-color: #0b5cff;
    font-size: 8px;
    font-weight: 700;
    line-height: 15px;
    text-align: center;
}

.tray-telegram, .notify {
    position: relative;
    display: flex;
}

.tray-telegram i {
    position: absolute;
    right: -1px;
    bottom: -1px;
    width: 10px;
    height: 10px;
    border-radius: 50%;
    background-color: #f23c34;
    font-size: 8px;
    line-height: 10px;
    text-align: center;
}

.clock {
    width: 56px;
    margin-right: 8px;
    font-size: 11px;
    text-align: center;
}

.notify i {
    position: absolute;
    left: 8px;
    top: 6px;
    width: 16px;
    height: 16px;
    border: 1px solid #999;
    border-radius: 50%;
    background-color: #2b2b2b;
    font-size: 11px;
    line-height: 14px;
    text-align: center;
}
```
